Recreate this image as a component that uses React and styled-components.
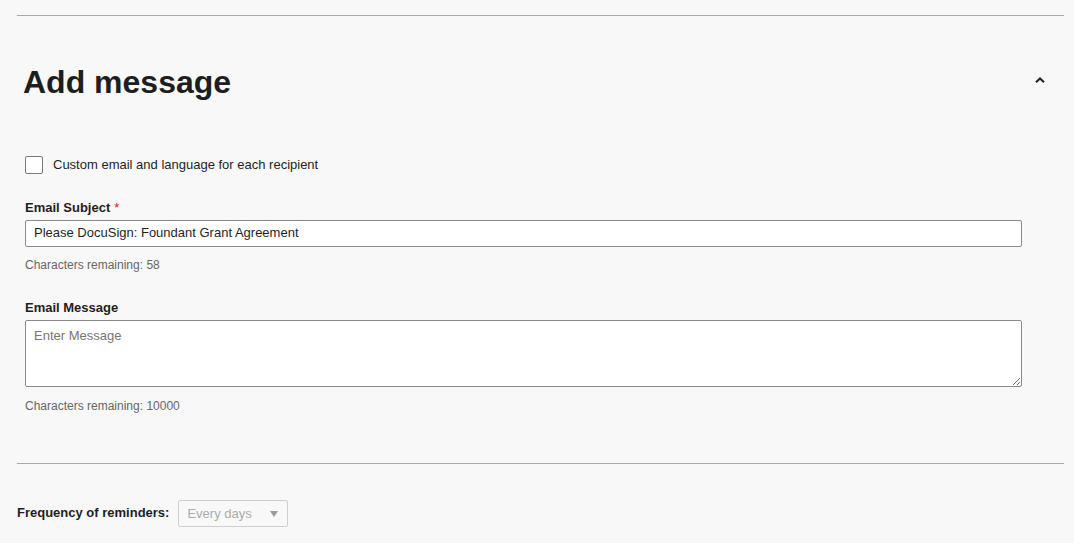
import React from 'react';
import styled, { createGlobalStyle } from 'styled-components';

const GlobalStyle = createGlobalStyle`
  html, body {
    margin: 0;
    padding: 0;
    background: #f8f8f8;
  }
  body {
    font-family: "Liberation Sans", Arial, sans-serif;
    color: #1e1e1e;
  }
`;

const Page = styled.div`
  padding: 15px 10px 0 17px;
`;

const Divider = styled.hr`
  margin: 0;
  border: 0;
  border-top: 1px solid #a9a9a9;
`;

const Header = styled.div`
  display: flex;
  align-items: flex-start;
  justify-content: space-between;
  margin-top: 46px;
  padding: 0 19px 0 6px;
`;

const Title = styled.h2`
  margin: 0;
  font-size: 32px;
  line-height: 40px;
  font-weight: 700;
  color: #1e1e1e;
`;

const Toggle = styled.button`
  display: flex;
  padding: 0;
  margin-top: 15px;
  border: 0;
  background: none;
  cursor: pointer;
`;

const Body = styled.div`
  padding: 0 42px 0 8px;
`;

const CheckRow = styled.label`
  display: flex;
  align-items: center;
  gap: 10px;
  margin-top: 54px;
  font-size: 13px;
  line-height: 16px;
  color: #1e1e1e;
`;

const Box = styled.span`
  width: 16px;
  height: 16px;
  border: 1px solid #7a7a7a;
  border-radius: 2px;
  background: #fff;
`;

const Field = styled.div`
  margin-top: ${p => p.$top}px;
`;

const Label = styled.div`
  font-size: 13px;
  line-height: 16px;
  font-weight: 700;
  color: #1e1e1e;
  margin-bottom: 4px;
`;

const Required = styled.span`
  color: #d0202a;
  font-weight: 400;
  margin-left: 4px;
`;

const TextInput = styled.input`
  display: block;
  box-sizing: border-box;
  width: 100%;
  height: 27px;
  margin: 0;
  padding: 0 8px 2px;
  border: 1px solid #8a8a8a;
  border-radius: 2px;
  background: #fff;
  font-family: inherit;
  font-size: 13px;
  color: #1e1e1e;
  outline: none;
`;

const TextArea = styled.textarea`
  display: block;
  box-sizing: border-box;
  width: 100%;
  height: 67px;
  margin: 0;
  padding: 7px 8px 6px;
  border: 1px solid #8a8a8a;
  border-radius: 2px;
  background: #fff;
  font-family: inherit;
  font-size: 13px;
  line-height: 16px;
  color: #1e1e1e;
  outline: none;
  &::placeholder {
    color: #767676;
  }
`;

const Help = styled.div`
  margin-top: ${p => p.$top || 10}px;
  font-size: 12px;
  line-height: 16px;
  color: #666;
`;

const BottomDivider = styled(Divider)`
  margin-top: 49px;
`;

const ReminderRow = styled.div`
  display: flex;
  align-items: center;
  gap: 9px;
  margin-top: 36px;
`;

const ReminderLabel = styled.span`
  font-size: 13px;
  font-weight: 700;
  color: #1e1e1e;
  padding-bottom: 3px;
`;

const Select = styled.div`
  box-sizing: border-box;
  display: flex;
  align-items: center;
  justify-content: space-between;
  width: 110px;
  height: 27px;
  padding: 0 9px 0 8px;
  border: 1px solid #cfcfcf;
  border-radius: 2px;
  font-size: 13px;
  color: #ababab;
`;

const Caret = styled.span`
  width: 0;
  height: 0;
  border-left: 4.5px solid transparent;
  border-right: 4.5px solid transparent;
  border-top: 6px solid #9a9a9a;
`;

export default function App() {
  return (
    <>
      <GlobalStyle />
      <Page>
        <Divider />
        <Header>
          <Title>Add message</Title>
          <Toggle aria-label="Collapse">
            <svg width="10" height="6" viewBox="0 0 10 6">
              <path d="M1 5.2 L5 1.4 L9 5.2" fill="none" stroke="#222" strokeWidth="2" />
            </svg>
          </Toggle>
        </Header>
        <Body>
          <CheckRow>
            <Box />
            Custom email and language for each recipient
          </CheckRow>
          <Field $top={26}>
            <Label>
              Email Subject<Required>*</Required>
            </Label>
            <TextInput defaultValue="Please DocuSign: Foundant Grant Agreement" />
            <Help>Characters remaining: 58</Help>
          </Field>
          <Field $top={27}>
            <Label>Email Message</Label>
            <TextArea placeholder="Enter Message" />
            <Help $top={11}>Characters remaining: 10000</Help>
          </Field>
        </Body>
        <BottomDivider />
        <ReminderRow>
          <ReminderLabel>Frequency of reminders:</ReminderLabel>
          <Select>
            Every days
            <Caret />
          </Select>
        </ReminderRow>
      </Page>
    </>
  );
}
